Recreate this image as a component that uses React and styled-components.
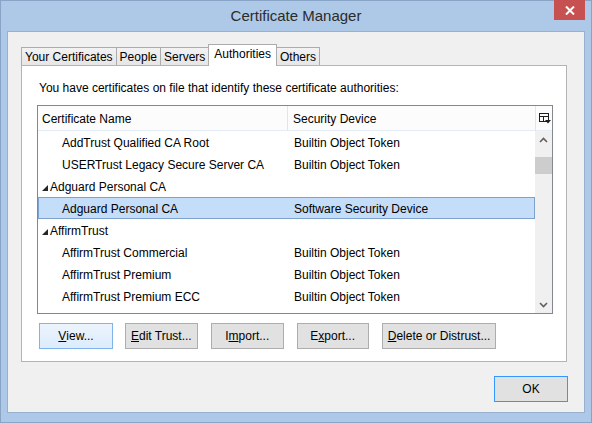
import React from "react";
import styled, { createGlobalStyle } from "styled-components";

const GlobalStyle = createGlobalStyle`
  html, body {
    margin: 0;
    padding: 0;
    background: #ffffff;
  }
  body {
    font-family: "Segoe UI", "Liberation Sans", Arial, sans-serif;
    font-size: 12px;
    color: #000000;
  }
  * {
    box-sizing: border-box;
  }
`;

const tabs = [
    { label: "Your Certificates" },
    { label: "People" },
    { label: "Servers" },
    { label: "Authorities", active: true },
    { label: "Others" }
];

const rows = [
    { name: "AddTrust Qualified CA Root", device: "Builtin Object Token" },
    { name: "USERTrust Legacy Secure Server CA", device: "Builtin Object Token" },
    { name: "Adguard Personal CA", parent: true },
    { name: "Adguard Personal CA", device: "Software Security Device", selected: true },
    { name: "AffirmTrust", parent: true },
    { name: "AffirmTrust Commercial", device: "Builtin Object Token" },
    { name: "AffirmTrust Premium", device: "Builtin Object Token" },
    { name: "AffirmTrust Premium ECC", device: "Builtin Object Token" }
];

// width is the button's box width in the reference
const actions = [
    { key: "V", rest: "iew...", focused: true, width: 74 },
    { key: "E", rest: "dit Trust...", width: 72 },
    { pre: "I", key: "m", rest: "port...", width: 73 },
    { pre: "E", key: "x", rest: "port...", width: 72 },
    { key: "D", rest: "elete or Distrust...", width: 112 }
];

const ExpandedGlyph = () => (
    <svg width="6" height="6" viewBox="0 0 6 6">
        <polygon points="6,0 6,6 0,6" fill="#262626" />
    </svg>
);

const ColumnPickerIcon = () => (
    <svg width="12" height="11" viewBox="0 0 12 11">
        <rect x="0.5" y="0.5" width="9" height="8" fill="none" stroke="#1e1e1e" />
        <line x1="0.5" y1="3.5" x2="9.5" y2="3.5" stroke="#1e1e1e" />
        <line x1="4.5" y1="3.5" x2="4.5" y2="8.5" stroke="#1e1e1e" />
        <polygon points="6,7 12,7 9,10.5" fill="#1e1e1e" />
    </svg>
);

const Chevron = ({ down }) => (
    <svg width="9" height="6" viewBox="0 0 9 6">
        <polyline
            points={down ? "1,1 4.5,4.5 8,1" : "1,5 4.5,1.5 8,5"}
            fill="none"
            stroke="#606060"
            strokeWidth="1.6"
        />
    </svg>
);

const App = () => {
    return (
        <>
            <GlobalStyle />
            <Window>
                <TitleBar>
                    <Title>Certificate Manager</Title>
                    <CloseButton>
                        <svg width="10" height="9" viewBox="0 0 10 9">
                            <line x1="1" y1="0.5" x2="9" y2="8.5" stroke="#fff" strokeWidth="2" />
                            <line x1="9" y1="0.5" x2="1" y2="8.5" stroke="#fff" strokeWidth="2" />
                        </svg>
                    </CloseButton>
                </TitleBar>
                <Client>
                    <TabStrip>
                        {tabs.map((tab) => (
                            <Tab key={tab.label} $active={tab.active}>
                                {tab.label}
                            </Tab>
                        ))}
                    </TabStrip>
                    <Panel>
                        <Intro>
                            You have certificates on file that identify these certificate authorities:
                        </Intro>
                        <Tree>
                            <Header>
                                <HeaderCell $divider>Certificate Name</HeaderCell>
                                <HeaderCell $wide>Security Device</HeaderCell>
                                <PickerCell>
                                    <ColumnPickerIcon />
                                </PickerCell>
                            </Header>
                            <Body>
                                <RowList>
                                    {rows.map((row, i) => (
                                        <Row key={i} $selected={row.selected}>
                                            {row.parent ? (
                                                <ParentName>
                                                    <ExpandedGlyph />
                                                    <span>{row.name}</span>
                                                </ParentName>
                                            ) : (
                                                <ChildName>{row.name}</ChildName>
                                            )}
                                            <Device>{row.device}</Device>
                                        </Row>
                                    ))}
                                </RowList>
                                <Scrollbar>
                                    <ArrowCell>
                                        <Chevron />
                                    </ArrowCell>
                                    <Track>
                                        <Thumb />
                                    </Track>
                                    <ArrowCell>
                                        <Chevron down />
                                    </ArrowCell>
                                </Scrollbar>
                            </Body>
                        </Tree>
                        <ButtonRow>
                            {actions.map((a) => (
                                <Button key={a.rest} $focused={a.focused} $width={a.width}>
                                    {a.pre}
                                    <u>{a.key}</u>
                                    {a.rest}
                                </Button>
                            ))}
                        </ButtonRow>
                    </Panel>
                    <Footer>
                        <OkButton>OK</OkButton>
                    </Footer>
                </Client>
            </Window>
        </>
    );
};

export default App;

const Window = styled.div`
    width: 592px;
    height: 423px;
    background: #adc9e7;
    border: 1px solid #88a5c8;
    display: flex;
    flex-direction: column;
`;

const TitleBar = styled.div`
    height: 30px;
    flex: none;
    display: grid;
    grid-template-columns: 1fr auto 1fr;
    padding: 0 6px;
`;

const Title = styled.div`
    grid-column: 2;
    font-size: 15px;
    line-height: 30px;
    color: #2b2b2b;
`;

const CloseButton = styled.div`
    grid-column: 3;
    justify-self: end;
    align-self: start;
    width: 31px;
    height: 20px;
    margin-top: -1px;
    background: #c75050;
    display: flex;
    align-items: center;
    justify-content: center;
`;

const Client = styled.div`
    flex: 1;
    margin: 0 6px 9px 6px;
    background: #f0f0f0;
    border: 1px solid #98b0cd;
    padding: 12px 17px 10px 13px;
    display: flex;
    flex-direction: column;
`;

const TabStrip = styled.div`
    height: 21px;
    display: flex;
    align-items: flex-end;
    position: relative;
    z-index: 1;
`;

const Tab = styled.div`
    height: ${(p) => (p.$active ? "22px" : "18px")};
    margin-bottom: ${(p) => (p.$active ? "-1px" : "0")};
    margin-left: -1px;
    padding: ${(p) => (p.$active ? "0 5px" : "0 3px")};
    line-height: ${(p) => (p.$active ? "19px" : "18px")};
    border: 1px solid #acacac;
    border-bottom: none;
    background: ${(p) =>
        p.$active ? "#ffffff" : "linear-gradient(#f2f2f2, #e6e6e6)"};
    white-space: nowrap;
    position: relative;
    z-index: ${(p) => (p.$active ? 2 : 1)};

    &:first-child {
        margin-left: 0;
    }
`;

const Panel = styled.div`
    height: 297px;
    background: #ffffff;
    border: 1px solid #b4b4b4;
    padding: 14px 13px 12px 15px;
    display: flex;
    flex-direction: column;
`;

const Intro = styled.div`
    line-height: 16px;
    margin-left: 2px;
`;

const Tree = styled.div`
    margin-top: 9px;
    height: 209px;
    border: 1px solid #828790;
    display: flex;
    flex-direction: column;
`;

const Header = styled.div`
    height: 25px;
    flex: none;
    display: grid;
    grid-template-columns: 250px 1fr 17px;
    background: #fcfcfc;
    border-bottom: 1px solid #e3ebf5;
`;

const HeaderCell = styled.div`
    line-height: 24px;
    padding-top: 1px;
    padding-left: ${(p) => (p.$wide ? "5px" : "4px")};
    border-right: ${(p) => (p.$divider ? "1px solid #e5e5e5" : "none")};
    white-space: nowrap;
`;

const PickerCell = styled.div`
    border-left: 1px solid #e5e5e5;
    display: flex;
    align-items: center;
    justify-content: center;
    padding-left: 2px;
`;

const Body = styled.div`
    flex: 1;
    display: grid;
    grid-template-columns: 1fr 17px;
    min-height: 0;
`;

const RowList = styled.div`
    overflow: hidden;
`;

const Row = styled.div`
    height: 22px;
    padding-top: 2px;
    display: grid;
    grid-template-columns: 250px 1fr;
    align-items: center;
    border: 1px solid ${(p) => (p.$selected ? "#7da2ce" : "transparent")};
    background: ${(p) => (p.$selected ? "#c4ddf8" : "transparent")};
    white-space: nowrap;
`;

const ChildName = styled.div`
    padding-left: 23px;
`;

const ParentName = styled.div`
    padding-left: 3px;
    display: flex;
    align-items: center;
    gap: 2px;

    svg {
        margin-top: 1px;
    }
`;

const Device = styled.div`
    padding-left: 5px;
`;

const Scrollbar = styled.div`
    background: #f0f0f0;
    display: flex;
    flex-direction: column;
`;

const ArrowCell = styled.div`
    height: 17px;
    flex: none;
    display: flex;
    align-items: center;
    justify-content: center;
`;

const Track = styled.div`
    flex: 1;
`;

const Thumb = styled.div`
    margin-top: 9px;
    height: 17px;
    background: #cdcdcd;
`;

const ButtonRow = styled.div`
    margin-top: 9px;
    margin-left: 2px;
    display: flex;
    gap: 13px;
`;

const Button = styled.div`
    height: 26px;
    min-width: ${(p) => p.$width}px;
    padding: 0 5px;
    display: flex;
    align-items: center;
    justify-content: center;
    white-space: nowrap;
    background: ${(p) =>
        p.$focused ? "linear-gradient(#ecf4fc, #dcecfc)" : "#e1e1e1"};
    border: 1px solid ${(p) => (p.$focused ? "#7eb4ea" : "#adadad")};

    &:first-child {
        margin-right: -1px;
    }

    u {
        text-decoration: underline;
    }
`;

const Footer = styled.div`
    margin-top: 14px;
    display: flex;
    justify-content: flex-end;
`;

const OkButton = styled.div`
    width: 74px;
    height: 26px;
    margin-right: -1px;
    display: flex;
    align-items: center;
    justify-content: center;
    background: #e1e1e1;
    border: 1px solid #3399ff;
`;
